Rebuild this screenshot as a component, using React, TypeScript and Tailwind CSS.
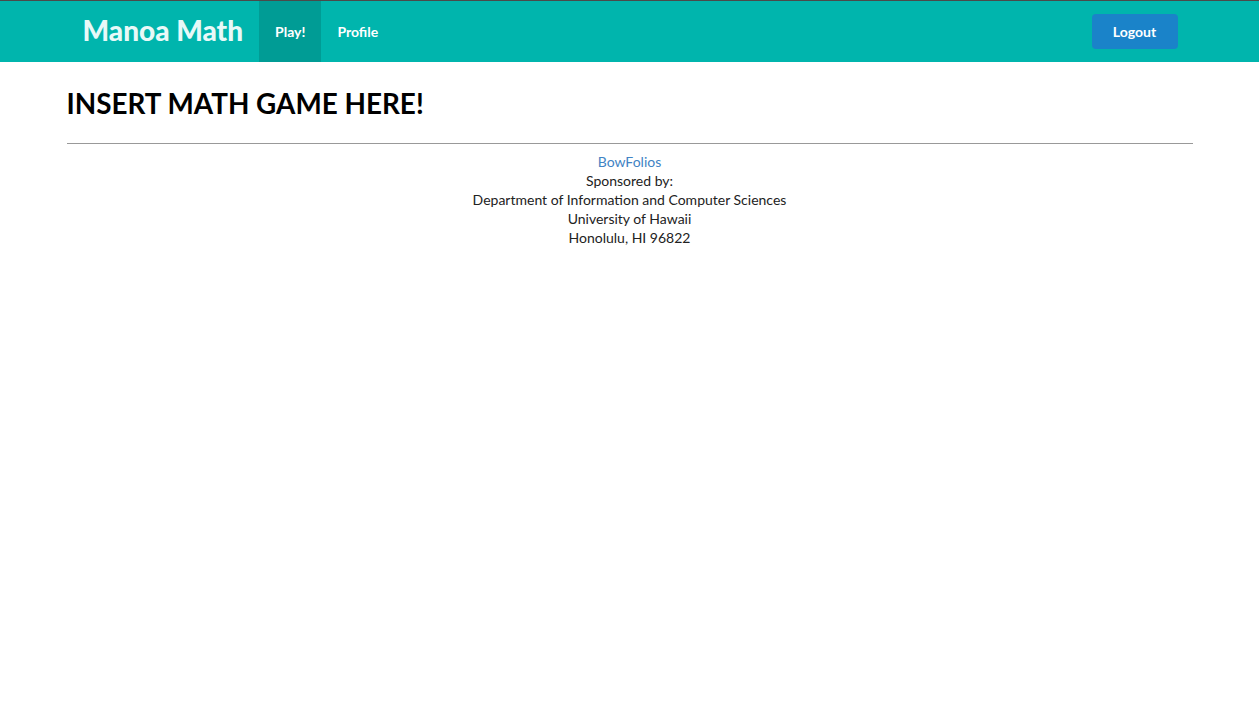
export default function App() {
  return (
    <div className="min-h-[704px] bg-white font-['Lato','Open_Sans',sans-serif] text-[14px] text-black">
      <div className="border-t border-[#4a4a4a] bg-[#00b5ad]">
        <div className="mx-auto flex h-[61px] w-[1126px] items-stretch">
          <a className="flex items-center px-4 pb-[3px] text-[28px] font-black text-[#e8f9f8]">Manoa Math</a>
          <a className="flex items-center bg-[#009c95] px-4 text-[14px] font-bold text-white">Play!</a>
          <a className="flex items-center px-4 text-[14px] font-bold text-white">Profile</a>
          <div className="ml-auto flex items-center pr-[15px]">
            <button className="h-[35px] w-[86px] rounded-[4px] bg-[#1a83c9] text-[14px] font-bold text-white">Logout</button>
          </div>
        </div>
      </div>
      <div className="mx-auto w-[1126px]">
        <h1 className="pt-[26px] text-[27.85px] leading-[32px] font-bold">INSERT MATH GAME HERE!</h1>
        <hr className="mt-[23px] border-t border-[#999]" />
        <div className="pt-[8px] text-center leading-[19px] text-[#222]">
          <a className="text-[#4183c4]">BowFolios</a>
          <div>Sponsored by:</div>
          <div>Department of Information and Computer Sciences</div>
          <div>University of Hawaii</div>
          <div>Honolulu, HI 96822</div>
        </div>
      </div>
    </div>
  )
}
